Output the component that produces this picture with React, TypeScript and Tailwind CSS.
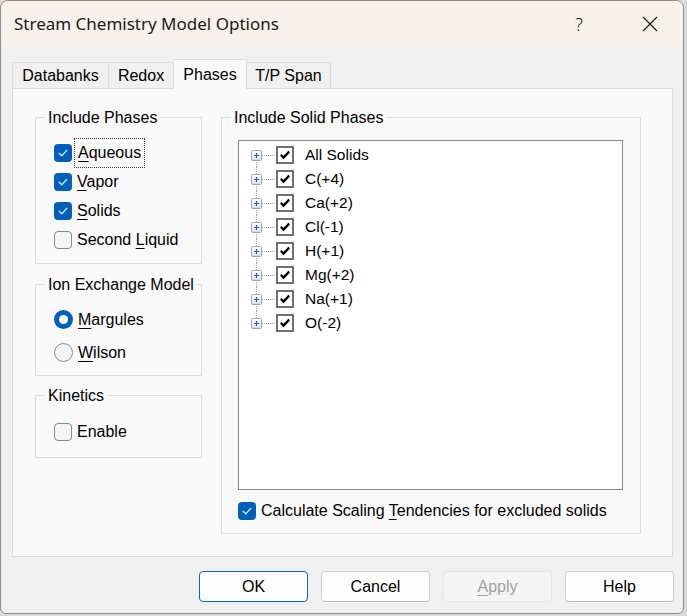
import React from 'react';

const ui = { fontFamily: '"Liberation Sans", Arial, sans-serif' };

const Mn: React.FC<{ children: React.ReactNode }> = ({ children }) => (
  <span className="underline underline-offset-[3px] decoration-1">{children}</span>
);

const WinCheck: React.FC<{ checked?: boolean }> = ({ checked }) =>
  checked ? (
    <span className="flex h-[18px] w-[18px] shrink-0 items-center justify-center rounded-[4px] bg-[#005fb8]">
      <svg width="12" height="12" viewBox="0 0 12 12">
        <path d="M2.2 6.3 L4.8 8.8 L9.8 3.4" fill="none" stroke="#dce9f7" strokeWidth="1.3" strokeLinecap="round" strokeLinejoin="round" />
      </svg>
    </span>
  ) : (
    <span className="h-[18px] w-[18px] shrink-0 rounded-[4px] border border-[#8a8a8a] bg-[#f6f6f6]" />
  );

const WinRadio: React.FC<{ checked?: boolean }> = ({ checked }) =>
  checked ? (
    <span className="flex h-[19px] w-[19px] shrink-0 items-center justify-center rounded-full bg-[#005fb8]">
      <span className="h-[9px] w-[9px] rounded-full bg-white" />
    </span>
  ) : (
    <span className="h-[19px] w-[19px] shrink-0 rounded-full border border-[#8a8a8a] bg-[#f3f3f3]" />
  );

const Group: React.FC<{ title: string; className?: string; inner?: string; children: React.ReactNode }> = ({ title, className, inner, children }) => (
  <fieldset className={`min-w-0 border border-[#dcdcdc] ${className ?? ''}`}>
    <legend className="ml-[9px] whitespace-nowrap px-[3px] text-[16px] leading-[17px] text-black">{title}</legend>
    <div className={inner}>{children}</div>
  </fieldset>
);

const TreeRow: React.FC<{ label: string; first?: boolean; last?: boolean }> = ({ label, first, last }) => (
  <div className="flex h-[24px] items-center">
    <svg width="25" height="24" viewBox="0 0 25 24" className="ml-[12px] shrink-0">
      <defs>
        <linearGradient id="pb" x1="0" y1="0" x2="0" y2="1">
          <stop offset="0" stopColor="#ffffff" />
          <stop offset="1" stopColor="#d6dde8" />
        </linearGradient>
      </defs>
      {!first && <line x1="5.5" y1="0" x2="5.5" y2="7" stroke="#a0a0a0" strokeDasharray="1 1" />}
      {!last && <line x1="5.5" y1="17" x2="5.5" y2="24" stroke="#a0a0a0" strokeDasharray="1 1" />}
      <line x1="11" y1="12.5" x2="25" y2="12.5" stroke="#a0a0a0" strokeDasharray="1 1" />
      <rect x="0.5" y="7.5" width="10" height="10" rx="1" fill="url(#pb)" stroke="#9aa6b8" />
      <path d="M3 12.5 H8 M5.5 10 V15" stroke="#2f5fb0" strokeWidth="1.2" />
    </svg>
    <span className="flex h-[18px] w-[18px] shrink-0 items-center justify-center border-2 border-[#707070] bg-white">
      <svg width="12" height="12" viewBox="0 0 12 12">
        <path d="M1.8 5.8 L4.6 8.6 L10.2 2.6" fill="none" stroke="#000" strokeWidth="2.3" />
      </svg>
    </span>
    <span className="ml-[11px] text-[15.5px] leading-none text-black">{label}</span>
  </div>
);

const Btn: React.FC<{ children: React.ReactNode; primary?: boolean; disabled?: boolean }> = ({ children, primary, disabled }) => (
  <button
    className={`h-[31px] w-[109px] rounded-[4px] text-[16px] ${
      primary
        ? 'border-[1.5px] border-[#0067c0] bg-[#fdfdfd] text-black'
        : disabled
        ? 'border border-[#e6e6e6] bg-[#f5f5f5] text-[#a2a2a2]'
        : 'border border-[#d0d0d0] border-b-[#bdbdbd] bg-[#fdfdfd] text-black'
    }`}
  >
    {children}
  </button>
);

export default function App() {
  const solids = ['All Solids', 'C(+4)', 'Ca(+2)', 'Cl(-1)', 'H(+1)', 'Mg(+2)', 'Na(+1)', 'O(-2)'];
  const row = 'flex items-center gap-[5px] text-[16px] text-black';

  return (
    <div className="h-[616px] w-[687px] bg-[#d9d9d9]" style={ui}>
      <div className="flex h-[614px] w-[684px] flex-col overflow-hidden rounded-t-[8px] rounded-b-[6px] border border-[#8c8c8c] bg-[#f0f0f0]">
        {/* title bar */}
        <div className="flex h-[46px] shrink-0 items-center bg-[#f9f1ec]">
          <span className="ml-[13px] text-[17px] text-[#1b1b1b]" style={{ fontFamily: '"Noto Sans", "Open Sans", sans-serif' }}>
            Stream Chemistry Model Options
          </span>
          <span className="ml-auto text-[18px] font-light text-[#1b1b1b]" style={{ fontFamily: '"Noto Sans", sans-serif' }}>?</span>
          <svg width="16" height="16" viewBox="0 0 16 16" className="ml-[59px] mr-[25px]">
            <path d="M1 1 L15 15 M15 1 L1 15" stroke="#1b1b1b" strokeWidth="1.2" />
          </svg>
        </div>

        {/* tabs */}
        <div className="ml-[11px] mt-[12px] flex h-[29px] items-end text-[16px] text-black">
          <div className="flex h-[26px] w-[97px] items-center justify-center border border-b-0 border-[#dcdcdc] bg-[#f0f0f0]">Databanks</div>
          <div className="flex h-[26px] w-[65px] items-center justify-center border border-b-0 border-l-0 border-[#dcdcdc] bg-[#f0f0f0]">Redox</div>
          <div className="relative z-10 -mb-px flex h-[30px] w-[73px] items-start justify-center border border-b-0 border-l-0 border-[#dcdcdc] bg-[#f9f9f9] pt-[3px]">Phases</div>
          <div className="flex h-[26px] w-[84px] items-center justify-center border border-b-0 border-l-0 border-[#dcdcdc] bg-[#f0f0f0]">T/P Span</div>
        </div>

        {/* panel */}
        <div className="ml-[11px] flex h-[469px] w-[661px] border border-[#dcdcdc] bg-[#f9f9f9] pl-[22px] pt-[20px]">
          <div className="flex w-[167px] flex-col">
            <Group title="Include Phases" inner="pb-[9px] pl-[18px] pt-[12px]">
              <label className={`${row} h-[29px]`}>
                <WinCheck checked />
                <span className="outline-1 outline-dotted outline-[#333] outline-offset-[2px] px-[1px]"><Mn>A</Mn>queous</span>
              </label>
              <label className={`${row} h-[29px]`}>
                <WinCheck checked />
                <span><Mn>V</Mn>apor</span>
              </label>
              <label className={`${row} h-[29px]`}>
                <WinCheck checked />
                <span><Mn>S</Mn>olids</span>
              </label>
              <label className={`${row} h-[29px]`}>
                <WinCheck />
                <span>Second <Mn>L</Mn>iquid</span>
              </label>
            </Group>

            <Group title="Ion Exchange Model" className="mt-[12px]" inner="pb-[6px] pl-[18px] pt-[10px]">
              <label className={`${row} h-[33px]`}>
                <WinRadio checked />
                <span><Mn>M</Mn>argules</span>
              </label>
              <label className={`${row} h-[33px]`}>
                <WinRadio />
                <span><Mn>W</Mn>ilson</span>
              </label>
            </Group>

            <Group title="Kinetics" className="mt-[11px]" inner="pb-[11px] pl-[18px] pt-[13px]">
              <label className={`${row} h-[29px]`}>
                <WinCheck />
                <span>Enable</span>
              </label>
            </Group>
          </div>

          <Group title="Include Solid Phases" className="ml-[19px] h-[425px] w-[420px]" inner="pl-[16px] pt-[14px]">
            <div className="h-[350px] w-[385px] border border-[#828790] bg-white pt-[2px]">
              {solids.map((s, i) => (
                <TreeRow key={s} label={s} first={i === 0} last={i === solids.length - 1} />
              ))}
            </div>
            <label className={`${row} mt-[6px] h-[29px]`}>
              <WinCheck checked />
              <span>Calculate Scaling <Mn>T</Mn>endencies for excluded solids</span>
            </label>
          </Group>
        </div>

        {/* buttons */}
        <div className="mr-[9px] mt-[14px] flex justify-end gap-[13px]">
          <Btn primary>OK</Btn>
          <Btn>Cancel</Btn>
          <Btn disabled><Mn>A</Mn>pply</Btn>
          <Btn>Help</Btn>
        </div>
      </div>
    </div>
  );
}
